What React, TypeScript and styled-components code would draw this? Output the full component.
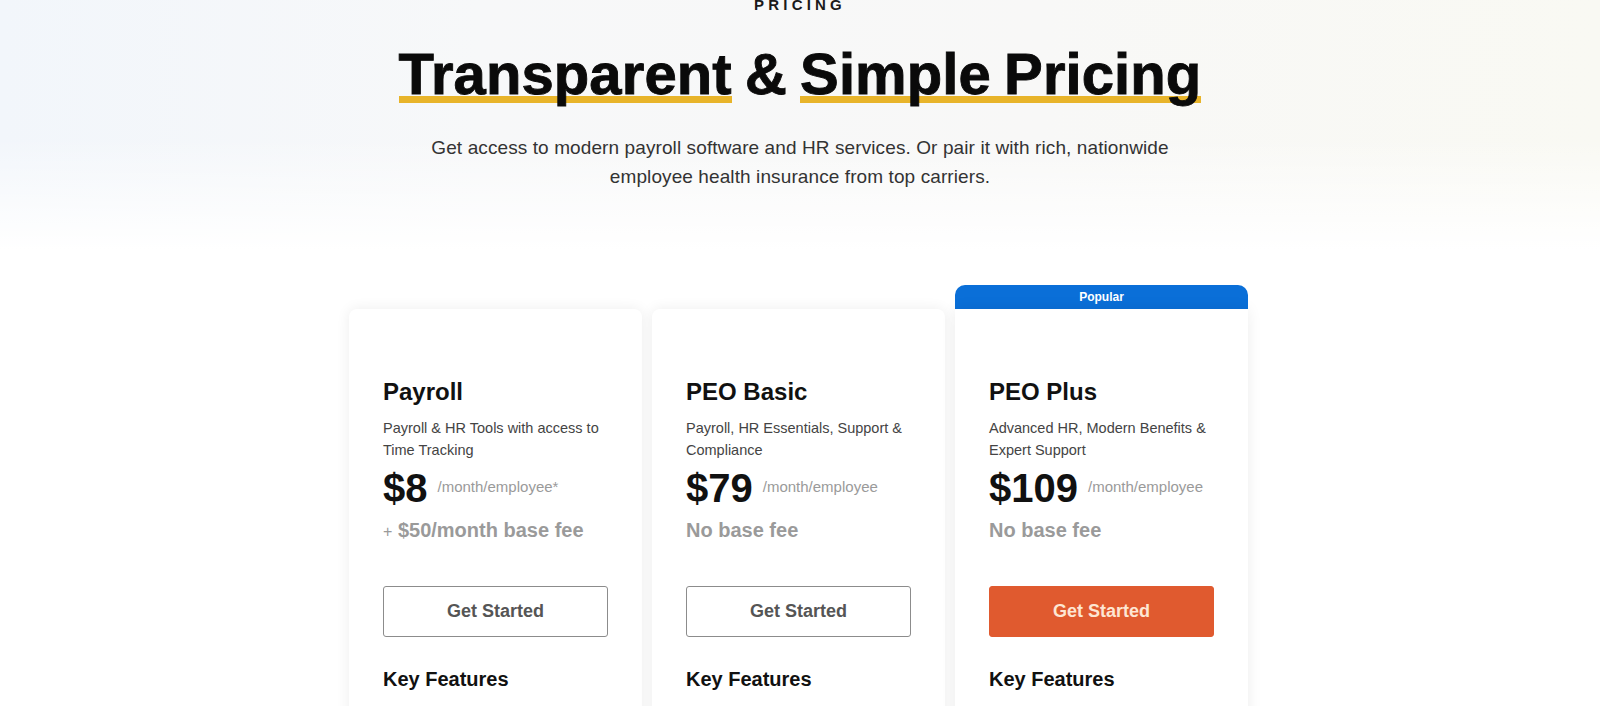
import styled, { createGlobalStyle } from 'styled-components';

const GlobalStyle = createGlobalStyle`
  html, body {
    margin: 0;
    padding: 0;
    background: #ffffff;
    overflow: hidden;
  }
  body {
    font-family: 'Liberation Sans', Arial, sans-serif;
    color: #111;
  }
  * { box-sizing: border-box; }
`;

const COLORS = {
  ink: '#111111',
  body: '#333333',
  muted: '#9a9a9a',
  gold: '#e8b42a',
  blue: '#0a6fd8',
  orange: '#e05a2f',
  orangeText: '#fde6d3',
};

type Plan = {
  name: string;
  blurb: string;
  price: string;
  unit: string;
  baseFee?: string;
  popular?: boolean;
  features: string[];
};

const PLANS: Plan[] = [
  {
    name: 'Payroll',
    blurb: 'Payroll & HR Tools with access to Time Tracking',
    price: '$8',
    unit: '/month/employee*',
    baseFee: '$50/month base fee',
    features: ['Full-service payroll', 'Time tracking', 'HR tools'],
  },
  {
    name: 'PEO Basic',
    blurb: 'Payroll, HR Essentials, Support & Compliance',
    price: '$79',
    unit: '/month/employee',
    features: ['Everything in Payroll', 'HR compliance', 'Support'],
  },
  {
    name: 'PEO Plus',
    blurb: 'Advanced HR, Modern Benefits & Expert Support',
    price: '$109',
    unit: '/month/employee',
    popular: true,
    features: ['Everything in PEO Basic', 'Modern benefits', 'Expert support'],
  },
];

const Page = styled.div`
  height: 706px;
  overflow: hidden;
`;

const Hero = styled.header`
  display: flex;
  flex-direction: column;
  align-items: center;
  height: 250px;
  background:
    linear-gradient(180deg, rgba(255, 255, 255, 0) 55%, #ffffff 100%),
    linear-gradient(90deg, #f2f6fb 0%, #f7f8f9 30%, #f8f8f7 65%, #f9f9f3 100%);
`;

const Eyebrow = styled.div`
  font-size: 15px;
  line-height: 10px;
  font-weight: 700;
  letter-spacing: 4.2px;
  color: #1a1a1a;
`;

const Title = styled.h1`
  margin: 31px 0 0;
  font-size: 58px;
  line-height: 66px;
  font-weight: 700;
  letter-spacing: 0.1px;
  word-spacing: -3px;
  color: #0a0a0a;
  -webkit-text-stroke: 0.9px #0a0a0a;
`;

const Marked = styled.span`
  background: linear-gradient(${COLORS.gold}, ${COLORS.gold}) no-repeat;
  background-size: 100% 7px;
  background-position: 0 calc(100% - 3px);
`;

const Lead = styled.p`
  margin: 26px 0 0;
  max-width: 780px;
  text-align: center;
  font-size: 19px;
  line-height: 29px;
  letter-spacing: 0.1px;
  color: ${COLORS.body};
`;

const Plans = styled.section`
  display: flex;
  justify-content: center;
  align-items: flex-end;
  gap: 10px;
  margin-top: 35px;
  padding-right: 3px;
`;

const Column = styled.div`
  width: 293px;
  display: flex;
  flex-direction: column;
`;

const Badge = styled.div`
  height: 24px;
  border-radius: 10px 10px 0 0;
  background: ${COLORS.blue};
  color: #fff;
  font-size: 12px;
  font-weight: 700;
  display: flex;
  align-items: center;
  justify-content: center;
`;

const Card = styled.div<{ $popular?: boolean }>`
  background: #fff;
  border-radius: ${({ $popular }) => ($popular ? '0' : '8px 8px 0 0')};
  box-shadow: 0 0 14px rgba(0, 0, 0, 0.075);
  padding: 68px 34px 40px;
  height: 470px;
`;

const PlanName = styled.h2`
  margin: 0;
  font-size: 24px;
  line-height: 29px;
  font-weight: 700;
  color: ${COLORS.ink};
`;

const Blurb = styled.p`
  margin: 11px 0 0;
  font-size: 14.5px;
  line-height: 22px;
  color: #444;
`;

const PriceRow = styled.div`
  margin-top: 4px;
  display: flex;
  align-items: center;
  gap: 10px;
`;

const Price = styled.span`
  font-size: 40px;
  line-height: 46px;
  font-weight: 700;
  color: ${COLORS.ink};
`;

const Unit = styled.span`
  font-size: 15px;
  color: ${COLORS.muted};
  margin-top: -4px;
`;

const Fee = styled.div`
  margin-top: 6px;
  height: 26px;
  font-size: 20px;
  line-height: 26px;
  font-weight: 700;
  color: ${COLORS.muted};
`;

const Plus = styled.span`
  font-weight: 400;
  font-size: 16px;
  line-height: 1;
`;

const StartButton = styled.button<{ $primary?: boolean }>`
  margin-top: 43px;
  width: 100%;
  height: 51px;
  border-radius: 3px;
  font-family: inherit;
  font-size: 18px;
  font-weight: 700;
  cursor: pointer;
  border: 1px solid ${({ $primary }) => ($primary ? COLORS.orange : '#8c8c8c')};
  background: ${({ $primary }) => ($primary ? COLORS.orange : '#fff')};
  color: ${({ $primary }) => ($primary ? COLORS.orangeText : '#555')};
`;

const FeaturesTitle = styled.h3`
  margin: 29px 0 0;
  font-size: 20px;
  line-height: 26px;
  font-weight: 700;
  color: ${COLORS.ink};
`;

const FeatureList = styled.ul`
  margin: 16px 0 0;
  padding: 0;
  list-style: none;
  font-size: 15px;
  line-height: 24px;
  color: #444;
`;

const PlanCard = ({ plan }: { plan: Plan }) => (
  <Column>
    {plan.popular && <Badge>Popular</Badge>}
    <Card $popular={plan.popular}>
      <PlanName>{plan.name}</PlanName>
      <Blurb>{plan.blurb}</Blurb>
      <PriceRow>
        <Price>{plan.price}</Price>
        <Unit>{plan.unit}</Unit>
      </PriceRow>
      <Fee>
        {plan.baseFee ? (
          <>
            <Plus>+</Plus> {plan.baseFee}
          </>
        ) : (
          'No base fee'
        )}
      </Fee>
      <StartButton $primary={plan.popular}>Get Started</StartButton>
      <FeaturesTitle>Key Features</FeaturesTitle>
      <FeatureList>
        {plan.features.map(f => (
          <li key={f}>{f}</li>
        ))}
      </FeatureList>
    </Card>
  </Column>
);

const App = () => (
  <Page>
    <GlobalStyle />
    <Hero>
      <Eyebrow>PRICING</Eyebrow>
      <Title>
        <Marked>Transparent</Marked> &amp; <Marked>Simple Pricing</Marked>
      </Title>
      <Lead>
        Get access to modern payroll software and HR services. Or pair it with rich, nationwide
        employee health insurance from top carriers.
      </Lead>
    </Hero>
    <Plans>
      {PLANS.map(p => (
        <PlanCard key={p.name} plan={p} />
      ))}
    </Plans>
  </Page>
);

export default App;
